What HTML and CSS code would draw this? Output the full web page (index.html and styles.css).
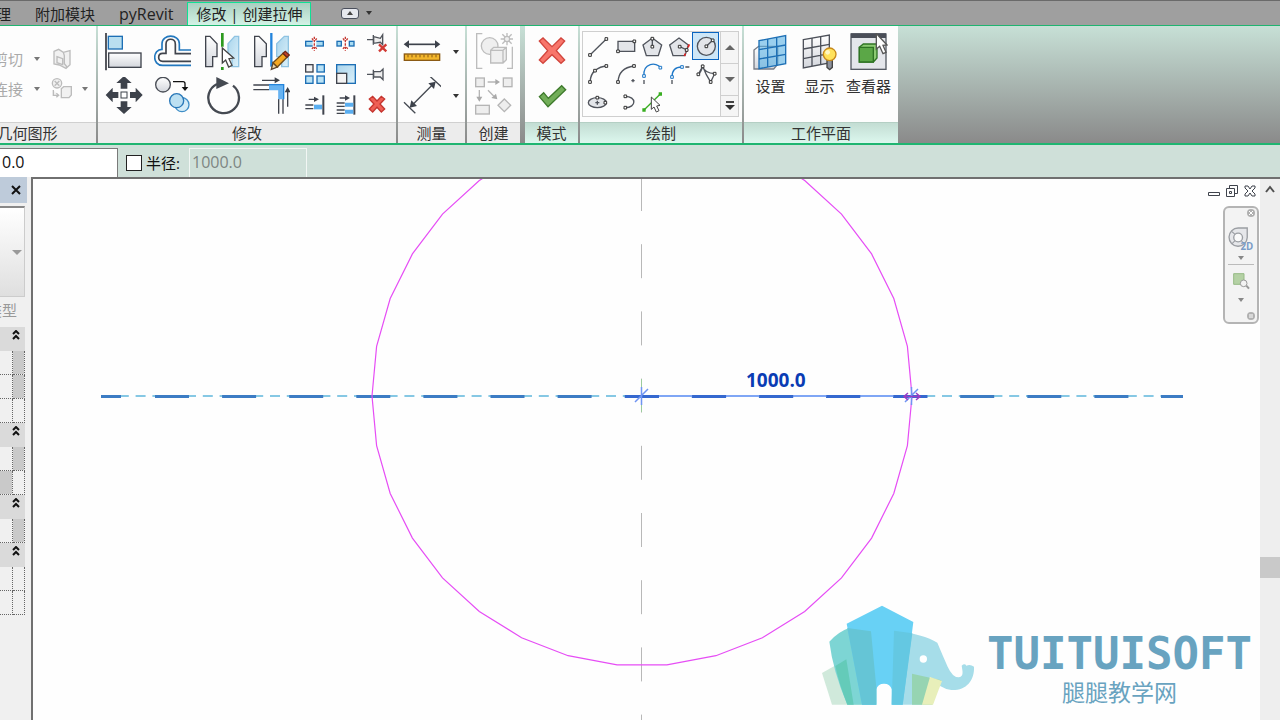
FILE: index.html
```html
<!DOCTYPE html>
<html lang="zh-CN">
  <head>
    <meta charset="UTF-8" />
    <meta name="viewport" content="width=device-width, initial-scale=1.0" />
    <title>修改 | 创建拉伸</title>
    <link rel="stylesheet" href="styles.css" />
  </head>
  <body>
    <svg class="defs" aria-hidden="true">
      <defs>
        <linearGradient id="steel" x1="0" y1="0" x2="0" y2="1">
          <stop offset="0" stop-color="#ffffff" />
          <stop offset="1" stop-color="#d3d6dc" />
        </linearGradient>
        <linearGradient id="sky" x1="0" y1="0" x2="1" y2="1">
          <stop offset="0" stop-color="#a9d4ec" />
          <stop offset="1" stop-color="#dcf1fa" />
        </linearGradient>
      </defs>
    </svg>

    <nav class="tabs">
      <a class="tab" href="#">理</a>
      <a class="tab" href="#">附加模块</a>
      <a class="tab addin" href="#">pyRevit</a>
      <a class="tab active" href="#">修改 | 创建拉伸</a>
      <button class="minimize" aria-label="最小化功能区"><span class="pill"><i class="caret up"></i></span><i class="caret"></i></button>
    </nav>

    <div class="ribbon">
      <section class="panel geometry">
        <div class="panel-body">
          <button class="cmd">剪切</button>
          <i class="caret"></i>
          <button aria-label="拆分面">
            <svg width="22" height="22" viewBox="153 141 66 66" fill="#f1f1f1" stroke="#bcbcbc" stroke-width="4">
              <path d="M162 151l14-6 14 9 20-5v42l-12 11-20-10-16-3z" />
              <path d="M171 167l17 6v18l-17-6zM190 154l3 10v24l8 10" />
            </svg>
          </button>
          <i></i>
          <button class="cmd">连接</button>
          <i class="caret"></i>
          <button aria-label="取消连接">
            <svg width="22" height="22" viewBox="153 236 66 66" fill="#f1f1f1" stroke="#bcbcbc" stroke-width="4">
              <circle cx="171" cy="252" r="14" />
              <path d="M164 245l14 14M178 245l-14 14M160 272v16h14M169 282l7 6-7 6" />
              <path d="M184 268l7-6h23v25l-7 8h-23z" />
            </svg>
          </button>
          <i class="caret"></i>
        </div>
        <h2>几何图形</h2>
      </section>

      <section class="panel modify">
        <div class="panel-body">
          <div class="big-tools">
            <button aria-label="对齐">
              <svg width="38" height="38" viewBox="15 21 114 114" stroke-width="4">
                <path d="M18 18v115" stroke="#35383f" stroke-width="5" />
                <rect x="25" y="31" width="42" height="38" fill="#b9dff0" stroke="#1d6fb5" />
                <rect x="26" y="81" width="97" height="43" fill="url(#steel)" stroke="#40444d" />
              </svg>
            </button>
            <button aria-label="偏移">
              <svg width="38" height="38" viewBox="162 21 114 114" fill="none">
                <path d="M273 72H238V53C238 23 186 23 186 53V70C158 70 155 118 188 118H273" stroke="#2278bf" stroke-width="5" />
                <path d="M273 83H226V54C226 35 198 35 198 54V82H188C172 82 172 106 188 106H273" stroke="#40444d" stroke-width="5" />
              </svg>
            </button>
            <button aria-label="镜像 - 拾取轴">
              <svg width="38" height="38" viewBox="310 21 114 114" stroke-width="4">
                <path d="M318 31h13l21 22v39h-13v30h-21z" fill="url(#steel)" stroke="#40444d" />
                <path d="M417 31h-12l-20 22v39h12v30h20z" fill="url(#sky)" stroke="#8fc3e2" />
                <path d="M368 18v44M368 123v9" stroke="#2d9a1f" stroke-width="8" />
                <path d="M368 66v45l10-9 9 21 10-5-9-20 14-2z" fill="#fff" stroke="#444" />
              </svg>
            </button>
            <button aria-label="镜像 - 绘制轴">
              <svg width="38" height="38" viewBox="21 21 114 114" stroke-width="4">
                <path d="M29 31h13l22 22v39H51v30H29z" fill="url(#steel)" stroke="#40444d" />
                <path d="M130 31h-12l-23 22v39h15v30h20z" fill="url(#sky)" stroke="#8fc3e2" />
                <path d="M79 18v104" stroke="#2384dc" stroke-width="7" />
                <path d="M79 130l5-20 13 13z" fill="#eed9ac" stroke="#5b4630" />
                <path d="M84 110l30-28 12 12-29 29z" fill="#f4a823" stroke="#6e4a18" />
                <path d="M114 82l7-6 12 11-7 7z" fill="#c5402b" stroke="#6a2a1a" />
              </svg>
            </button>
            <button aria-label="移动">
              <svg width="38" height="38" viewBox="15 153 114 114" fill="#3d424b">
                <path d="M72 150l23 21H82v17H62v-17H49zM72 264l23-21H82v-17H62v17H49zM17 207l21-22v13h17v18H38v13zM128 207l-21-22v13H90v18h17v13z" />
                <rect x="63" y="198" width="18" height="18" fill="#fff" stroke="#3d424b" stroke-width="3" />
              </svg>
            </button>
            <button aria-label="复制">
              <svg width="38" height="38" viewBox="162 153 114 114" stroke-width="4">
                <circle cx="189" cy="176" r="22" fill="url(#steel)" stroke="#4a4e56" />
                <circle cx="246" cy="236" r="21" fill="#d4ecf8" stroke="#3f8ec7" />
                <circle cx="230" cy="224" r="21" fill="#bce0f2" stroke="#2877b8" />
                <path d="M219 167h30q6 0 6 6v14" fill="none" stroke="#111" />
                <path d="M245 183h20l-10 12z" fill="#111" />
              </svg>
            </button>
            <button aria-label="旋转">
              <svg width="38" height="38" viewBox="310 153 114 114">
                <path d="M352 174a46 46 0 1 0 48 5" fill="none" stroke="#454a52" stroke-width="7" />
                <path d="M350 153v36l38-17z" fill="#454a52" />
              </svg>
            </button>
            <button aria-label="修剪/延伸为角">
              <svg width="38" height="38" viewBox="21 153 114 114" fill="none" stroke="#40444d" stroke-width="4">
                <path d="M25 177h47M25 191h47M101 219v44M114 219v44" />
                <path d="M72 184h36v36" stroke="#67b3f2" stroke-width="17" />
                <path d="M72 176h44v44" stroke="#2384dc" />
                <path d="M51 163h44M128 242v-48" />
                <path d="M89 154l16 9-16 9zM119 199l9-16 9 16z" fill="#3d424b" stroke="none" />
              </svg>
            </button>
          </div>
          <div class="small-tools">
            <button aria-label="拆分图元">
              <svg width="24" height="24" viewBox="174 18 72 72">
                <rect x="182" y="46" width="53" height="14" fill="#a9dcf2" stroke="#1d6fb5" stroke-width="4" />
                <rect x="203" y="42" width="11" height="22" fill="#fff" />
                <path d="M208 32v42M201 37l5 8M215 37l-5 8M201 69l5-8M215 69l-5-8" stroke="#c63a33" stroke-width="4" stroke-dasharray="7 3" />
              </svg>
            </button>
            <button aria-label="用间隙拆分">
              <svg width="24" height="24" viewBox="267 18 72 72">
                <g fill="#a9dcf2" stroke="#1d6fb5" stroke-width="4">
                  <rect x="276" y="46" width="13" height="14" /><rect x="313" y="46" width="14" height="14" />
                </g>
                <path d="M301 32v42M294 37l5 8M308 37l-5 8M294 69l5-8M308 69l-5-8" stroke="#c63a33" stroke-width="4" stroke-dasharray="7 3" />
              </svg>
            </button>
            <button aria-label="解锁">
              <svg width="24" height="24" viewBox="360 18 72 72" fill="#eee" stroke="#50545b" stroke-width="4">
                <path d="M366 41h19M385 27v29M386 32l20 5 7-11v30l-7-7-20 3z" />
                <path d="M402 55l22 21M424 55l-22 21" stroke="#d23b35" stroke-width="7" />
              </svg>
            </button>
            <button aria-label="阵列">
              <svg width="24" height="24" viewBox="174 108 72 72" fill="#b9e2f5" stroke="#1d6fb5" stroke-width="4">
                <rect x="182" y="116" width="22" height="22" fill="#f3f3f3" stroke="#40444d" />
                <rect x="216" y="116" width="22" height="22" />
                <rect x="182" y="150" width="22" height="22" />
                <rect x="216" y="150" width="22" height="22" />
              </svg>
            </button>
            <button aria-label="缩放">
              <svg width="24" height="24" viewBox="267 108 72 72" stroke-width="4">
                <rect x="275" y="116" width="56" height="56" fill="url(#sky)" stroke="#1d6fb5" />
                <rect x="275" y="142" width="30" height="30" fill="#f3f3f3" stroke="#40444d" />
              </svg>
            </button>
            <button aria-label="锁定">
              <svg width="24" height="24" viewBox="360 108 72 72" fill="#eee" stroke="#50545b" stroke-width="4">
                <path d="M366 145h19M385 131v29M386 137h20l8-8v32l-8-8h-20z" />
              </svg>
            </button>
            <button aria-label="修剪/延伸单个图元">
              <svg width="24" height="24" viewBox="174 198 72 72" fill="none" stroke="#40444d" stroke-width="4">
                <path d="M235 208v58" stroke-width="6" />
                <path d="M181 237h24M181 248h24M191 220h20" />
                <path d="M207 243h24" stroke="#5aaef0" stroke-width="14" />
                <path d="M207 212l15 8-15 8z" fill="#3d424b" stroke="none" />
              </svg>
            </button>
            <button aria-label="修剪/延伸多个图元">
              <svg width="24" height="24" viewBox="267 198 72 72" fill="none" stroke="#40444d" stroke-width="4">
                <path d="M328 208v58" stroke-width="6" />
                <path d="M275 231h24M275 241h24M275 252h24M275 262h24M284 216h20" />
                <path d="M300 236h25M300 257h25" stroke="#5aaef0" stroke-width="12" />
                <path d="M300 208l15 8-15 8z" fill="#3d424b" stroke="none" />
              </svg>
            </button>
            <button aria-label="删除">
              <svg width="24" height="24" viewBox="360 198 72 72">
                <path d="M373 219l10-8 13 14 13-14 10 8-14 15 14 15-10 9-13-14-13 14-10-9 14-15z" fill="#ef5f55" stroke="#c5352f" stroke-width="4" />
              </svg>
            </button>
          </div>
        </div>
        <h2>修改</h2>
      </section>

      <section class="panel measure">
        <div class="panel-body">
          <button aria-label="测量">
            <svg width="38" height="38" viewBox="25 21 114 114">
              <path d="M35 55h95" stroke="#3d424b" stroke-width="5" />
              <path d="M27 55l16-12v24zM137 55l-16-12v24z" fill="#3d424b" />
              <rect x="29" y="84" width="106" height="19" fill="#f3b62b" stroke="#8b5a14" stroke-width="4" />
              <path d="M40 86v8M52 86v8M64 86v8M76 86v8M88 86v8M100 86v8M112 86v8M124 86v8" stroke="#8b5a14" stroke-width="3" />
            </svg>
          </button>
          <i class="caret"></i>
          <button aria-label="对齐尺寸标注">
            <svg width="38" height="38" viewBox="25 153 114 114">
              <path d="M50 240l68-68M106 151l34 31M28 229l34 33" stroke="#454a52" stroke-width="4" />
              <path d="M123 167l-5 22-17-17zM45 245l5-22 17 17z" fill="#3d424b" />
            </svg>
          </button>
          <i class="caret"></i>
        </div>
        <h2>测量</h2>
      </section>

      <section class="panel create">
        <div class="panel-body">
          <button aria-label="创建组">
            <svg width="38" height="38" viewBox="234 21 114 114" fill="#efefef" stroke="#bdbdbd" stroke-width="4">
              <path d="M256 23h-17v104h17M330 127h16V62" fill="none" />
              <circle cx="278" cy="60" r="25" />
              <path d="M281 73l9-9h38v37l-10 10h-37zM281 73h37v38M318 73l10-9" />
              <path d="M330 20v38M311 39h38M316 25l28 28M344 25l-28 28" />
              <circle cx="330" cy="39" r="8" />
            </svg>
          </button>
          <button aria-label="创建类似">
            <svg width="38" height="38" viewBox="234 150 114 114" fill="#eee" stroke="#b5b5b5" stroke-width="4">
              <rect x="236" y="153" width="26" height="26" />
              <rect x="319" y="153" width="26" height="26" />
              <rect x="236" y="235" width="41" height="26" />
              <path d="M322 216l19 19-19 19-19-19z" />
              <path d="M272 165h25M247 189v23M273 190l17 17" />
              <path d="M295 156l14 9-14 9zM238 209l9 15 9-15zM297 200l4 17-18-4z" fill="#a9a9a9" stroke="none" />
            </svg>
          </button>
        </div>
        <h2>创建</h2>
      </section>

      <section class="panel mode context">
        <div class="panel-body">
          <button aria-label="取消编辑模式">
            <svg width="38" height="38" viewBox="413 21 114 114">
              <path d="M432 45l11-9 27 26 27-26 11 9-25 29 25 28-11 10-27-26-27 26-11-10 25-28z" fill="#f8766b" stroke="#d2453d" stroke-width="4" />
            </svg>
          </button>
          <button aria-label="完成编辑模式">
            <svg width="38" height="38" viewBox="413 153 114 114">
              <path d="M432 212l13-12 14 17 40-38 12 12-53 51z" fill="#72ae59" stroke="#3e7a2c" stroke-width="4" />
            </svg>
          </button>
        </div>
        <h2>模式</h2>
      </section>

      <section class="panel draw context">
        <div class="panel-body">
          <div class="gallery">
            <div class="shapes">
              <button aria-label="线">
                <svg width="26" height="26" viewBox="18 21 78 78"><path class="line" d="M33 87l49-48" /><path class="node" d="M29 83h8v8h-8zM78 35h8v8h-8z" /></svg>
              </button>
              <button aria-label="矩形">
                <svg width="26" height="26" viewBox="102 21 78 78"><path class="line face" d="M120 46h50v30h-50z" /><path class="node" d="M116 72h8v8h-8zM165 42h8v8h-8z" /></svg>
              </button>
              <button aria-label="内接多边形">
                <svg width="26" height="26" viewBox="183 21 78 78"><path class="line face" d="M223 36l28 21-10 32h-36l-10-32z" /><path class="line" d="M223 38v24" /><path class="node" d="M219 34h8v8h-8zM219 58h8v8h-8z" /></svg>
              </button>
              <button aria-label="外接多边形">
                <svg width="26" height="26" viewBox="264 21 78 78"><path class="line face" d="M303 36l28 21-10 32h-36l-10-32z" /><path class="line" d="M305 62l22 10" /><path d="M334 55l-15 35" stroke="#e02020" stroke-width="5" stroke-dasharray="10 5" /><path class="node" d="M301 58h8v8h-8zM322 68h8v8h-8z" /></svg>
              </button>
              <button class="selected" aria-label="圆形">
                <svg width="26" height="26" viewBox="345 21 78 78"><circle class="line face" cx="385" cy="61" r="27" /><path class="line" d="M385 61l19-18" /><path class="node" d="M381 57h8v8h-8zM400 39h8v8h-8z" /></svg>
              </button>
              <button aria-label="起点-终点-半径弧">
                <svg width="26" height="26" viewBox="18 105 78 78"><path class="line" d="M33 168q2-25 16-35 15-12 33-13" /><path class="node" d="M29 164h8v8h-8zM44 130h8v8h-8zM78 116h8v8h-8z" /></svg>
              </button>
              <button aria-label="圆心-端点弧">
                <svg width="26" height="26" viewBox="102 105 78 78"><path class="line" d="M120 168q2-42 48-48M160 164h10M165 159v10" /><path class="node" d="M116 164h8v8h-8zM164 116h8v8h-8z" /></svg>
              </button>
              <button aria-label="相切-端点弧">
                <svg width="26" height="26" viewBox="183 105 78 78"><path class="line blue" d="M198 150c-4-40 38-43 49-25" /><path class="line" d="M198 162v12" /><path class="node blue" d="M194 146h8v8h-8zM243 121h8v8h-8z" /></svg>
              </button>
              <button aria-label="圆角弧">
                <svg width="26" height="26" viewBox="264 105 78 78"><path class="line blue" d="M282 153q0-30 29-30" /><path class="line" d="M282 162v12M322 123h12" /><path class="node blue" d="M278 149h8v8h-8zM308 119h8v8h-8z" /></svg>
              </button>
              <button aria-label="样条曲线">
                <svg width="26" height="26" viewBox="345 105 78 78"><path class="line" d="M361 145l13-24 11 25 13 22 12-25q-30-2-36-22-5 18-13 24" /><path class="node" d="M357 141h8v8h-8zM370 117h8v8h-8zM394 164h8v8h-8zM406 139h8v8h-8z" /></svg>
              </button>
              <button aria-label="椭圆">
                <svg width="26" height="26" viewBox="18 189 78 78"><ellipse class="line face" cx="55" cy="230" rx="27" ry="15" /><path class="line" d="M49 230h12M55 224v12" /><path class="node" d="M51 211h8v8h-8zM75 226h8v8h-8z" /></svg>
              </button>
              <button aria-label="半椭圆">
                <svg width="26" height="26" viewBox="102 189 78 78"><path class="line" d="M142 211c34 0 34 34 0 34" /><path class="node" d="M138 207h8v8h-8zM138 241h8v8h-8z" /></svg>
              </button>
              <button aria-label="拾取线">
                <svg width="26" height="26" viewBox="183 189 78 78"><path d="M198 252l49-48" stroke="#38ad20" stroke-width="4" /><path d="M193 247h10v10h-10zM242 199h10v10h-10z" fill="#38ad20" /><path d="M220 213v37l8-7 7 15 8-4-7-14 10-2z" fill="#fff" stroke="#444" stroke-width="3" /></svg>
              </button>
            </div>
            <div class="gallery-scroll">
              <button aria-label="上一行"><i class="caret up"></i></button>
              <button aria-label="下一行"><i class="caret"></i></button>
              <button class="more" aria-label="更多"><i class="caret"></i></button>
            </div>
          </div>
        </div>
        <h2>绘制</h2>
      </section>

      <section class="panel workplane context">
        <div class="panel-body">
          <button>
            <svg width="38" height="38" viewBox="33 99 114 114" stroke-width="4">
              <path d="M39 150l14-11h57v54l-12 14H39z" fill="url(#steel)" stroke="#777c86" />
              <path d="M54 122l80-15v84l-80 15z" fill="#58b0e4" fill-opacity=".6" stroke="#1d6fb5" />
              <path d="M80 117v84M107 112v84M54 149l80-14M54 177l80-14" stroke="#1d6fb5" />
            </svg>
            设置
          </button>
          <button>
            <svg width="38" height="38" viewBox="180 99 114 114" stroke-width="4">
              <path d="M187 119l78-14v84l-78 15z" fill="url(#steel)" stroke="#4d515a" />
              <path d="M213 114v84M239 109v84M187 147l78-14M187 176l78-15" stroke="#4d515a" />
              <path d="M258 180h16v22l-8 7-8-7z" fill="#8d929c" stroke="#444" />
              <circle cx="266" cy="163" r="19" fill="#ffe25c" stroke="#c8891a" />
              <circle cx="260" cy="157" r="7" fill="#fff7c4" />
            </svg>
            显示
          </button>
          <button>
            <svg width="38" height="38" viewBox="330 99 114 114" stroke-width="4">
              <rect x="333" y="102" width="105" height="106" fill="#e4e6eb" stroke="#555a64" />
              <path d="M333 107h105" stroke="#4a4e58" stroke-width="14" />
              <path d="M358 142l12-10h41v42l-11 12h-42z" fill="#8ccb73" stroke="#2f7424" />
              <path d="M358 142h42v44h-42z" fill="#5ba747" stroke="#2f7424" />
              <path d="M409 101v46l10-8 10 22 9-4-9-21 12-1z" fill="#fff" stroke="#555" />
            </svg>
            查看器
          </button>
        </div>
        <h2>工作平面</h2>
      </section>
    </div>

    <form class="options">
      <input class="offset" type="text" value="0.0" aria-label="偏移" />
      <label class="radius-label"><input type="checkbox" />半径:</label>
      <input class="radius" type="text" value="1000.0" aria-label="半径" disabled />
    </form>

    <main class="workspace">
      <aside class="properties">
        <header>
          <button aria-label="关闭">
            <svg width="12" height="12" viewBox="0 0 12 12"><path d="M2 2l8 8M10 2l-8 8" stroke="#111" stroke-width="2" /></svg>
          </button>
        </header>
        <button class="type-selector" aria-label="类型选择器"><i class="caret"></i></button>
        <div class="edit-type"><span>类型</span></div>
        <button class="group" aria-label="折叠"><svg width="8" height="10" viewBox="0 0 8 10"><path d="M1 4l3-3 3 3M1 9l3-3 3 3" /></svg></button>
        <div class="prop"><span></span><span class="grey"></span></div>
        <div class="prop"><span></span><span class="grey"></span></div>
        <div class="prop"><span></span><span></span></div>
        <button class="group" aria-label="折叠"><svg width="8" height="10" viewBox="0 0 8 10"><path d="M1 4l3-3 3 3M1 9l3-3 3 3" /></svg></button>
        <div class="prop"><span></span><span class="grey"></span></div>
        <div class="prop"><span class="grey"></span><span></span></div>
        <button class="group" aria-label="折叠"><svg width="8" height="10" viewBox="0 0 8 10"><path d="M1 4l3-3 3 3M1 9l3-3 3 3" /></svg></button>
        <div class="prop"><span></span><span class="grey"></span></div>
        <button class="group" aria-label="折叠"><svg width="8" height="10" viewBox="0 0 8 10"><path d="M1 4l3-3 3 3M1 9l3-3 3 3" /></svg></button>
        <div class="prop"><span></span><span></span></div>
        <div class="prop"><span></span><span></span></div>
      </aside>

      <div class="view">
        <div class="canvas">
          <svg class="sketch" viewBox="33 179 1227 541" preserveAspectRatio="xMidYMid slice">
            <!-- reference planes -->
            <path d="M641.5 177V720" stroke="#b8b8b8" stroke-dasharray="34 33.2" />
            <path d="M101 396H1183" stroke="#86c8e4" stroke-width="2" stroke-dasharray="10 6.8" stroke-dashoffset="-1" />
            <path d="M101 396.5h20M155 396.5H1160" stroke="#3c7cc4" stroke-width="3" stroke-dasharray="34 33.1" />
            <path d="M1161 396.5h22" stroke="#3c7cc4" stroke-width="3" />
            <!-- circle being sketched -->
            <polygon points="912,396 907.4,445.6 893.8,493.5 871.6,538.1 841.5,577.9 804.7,611.5 762.4,637.7 715.9,655.7 666.9,664.8 617.1,664.8 568.1,655.7 521.6,637.7 479.3,611.5 442.5,577.9 412.4,538.1 390.2,493.5 376.6,445.6 372,396 376.6,346.4 390.2,298.5 412.4,253.9 442.5,214.1 479.3,180.5 521.6,154.3 568.1,136.3 617.1,127.2 666.9,127.2 715.9,136.3 762.4,154.3 804.7,180.5 841.5,214.1 871.6,253.9 893.8,298.5 907.4,346.4" fill="none" stroke="#e64df5" stroke-width="1.2" />
            <!-- radius dimension -->
            <path d="M642 396H912" stroke="#7fa6f5" stroke-width="2" />
            <path d="M625 396.5H928" stroke="#3568cf" stroke-width="3" stroke-dasharray="34 33.1" />
            <path d="M641.5 379v33" stroke="#9ccb9c" />
            <path d="M641.5 387v18M635 402l13-13M911.5 387v18M905 402l13-13" stroke="#6f94f2" stroke-width="1.5" />
            <path d="M905 396.5h14M908 393l-4 3.5 4 3.5M916 393l4 3.5-4 3.5" fill="none" stroke="#9b3bc4" stroke-width="1.5" />
            <text class="dimension" x="746" y="387">1000.0</text>
          </svg>

          <div class="window-buttons">
            <button aria-label="最小化"><svg width="14" height="14" viewBox="0 0 14 14"><path d="M1.500 8.500h11v3h-11z" /></svg></button>
            <button aria-label="还原"><svg width="14" height="14" viewBox="0 0 14 14"><path d="M4.500 4V1.500h8v8H10M1.500 4.500h8v8h-8zM4.500 7.500h2v2h-2z" /></svg></button>
            <button aria-label="关闭"><svg width="14" height="14" viewBox="0 0 14 14"><path d="M2 2h3l2 3 2-3h3v2L9 7l3 3v2H9L7 9l-2 3H2v-2l3-3-3-3z" /></svg></button>
          </div>

          <div class="navbar">
            <button class="knob" aria-label="关闭导航栏"><svg width="8" height="8" viewBox="0 0 8 8"><circle cx="4" cy="4" r="4" fill="#b0b0b0" /><path d="M2 2l4 4M6 2L2 6" stroke="#fff" /></svg></button>
            <button class="wheel" aria-label="二维控制盘">
              <svg width="27" height="27" viewBox="115 148 80 80">
                <path d="M145 157h27v28a27 27 0 1 1-27-28z" fill="#e6e7ea" stroke="#9b9ea3" stroke-width="4" />
                <circle cx="145" cy="185" r="13" fill="#fafafa" stroke="#9b9ea3" stroke-width="4" />
                <path d="M127 168l9 8M154 194l8 9M136 194l-9 9" stroke="#9b9ea3" stroke-width="3" />
                <text x="152" y="221" class="two-d">2D</text>
              </svg>
            </button>
            <i class="caret"></i>
            <hr />
            <button class="zoom" aria-label="区域放大">
              <svg width="20" height="20" viewBox="122 284 60 60">
                <path d="M130 292h31v32h-31z" fill="#b4d1a4" stroke="#97bb86" stroke-width="3" />
                <path d="M168 328l8 9" stroke="#999" stroke-width="6" />
                <circle cx="160" cy="321" r="10" fill="#f3f3f3" stroke="#999" stroke-width="3" />
              </svg>
            </button>
            <i class="caret"></i>
            <button class="knob" aria-label="导航栏选项"><svg width="8" height="8" viewBox="0 0 8 8"><circle cx="4" cy="4" r="4" fill="#b0b0b0" /><path d="M2 3h4M2 5h4" stroke="#fff" /></svg></button>
          </div>

          <div class="watermark">
            <svg width="157" height="102" viewBox="30 40 471 306">
              <path d="M36 247l73-41 48 136H66z" fill="#d0e9db" />
              <path d="M58 153q26-30 61-42l64 10 16 121v100h-87q-43-100-54-189z" fill="#7dd5d4" />
              <path d="M76 226l33-20 22 136h-19q-24-60-36-116z" fill="#64cbb9" />
              <path d="M252 120q90 10 130 36 15 36 31 72 15 33 34 32c16-3 10-21 8-35q9-8 14 0 12-5 23 3c2 43-25 72-68 70q-36-5-64-40l-24 84h-88z" fill="#a6dde9" />
              <path d="M306 249l88 20-27 73h-61z" fill="#96d4b2" />
              <path d="M360 259l36 12-27 71h-33z" fill="#e8efba" />
              <path d="M110 99l106-54 94 49-32 248h-33v-46q-4-17-23-17t-23 17v46h-43z" fill="#68d1f5" />
              <path d="M112 112l71 10 16 169v51h-43z" fill="#65c5d6" />
              <path d="M252 120l55 8-29 214h-33z" fill="#64c8e2" />
              <circle cx="340" cy="205" r="11" fill="#fff" />
            </svg>
            <div class="brand">
              <strong>TUITUISOFT</strong>
              <span>腿腿教学网</span>
            </div>
          </div>
        </div>

        <div class="scrollbar">
          <button aria-label="向上滚动"><svg width="12" height="10" viewBox="0 0 12 10"><path d="M2 8l4-5 4 5" fill="none" stroke="#505050" stroke-width="2" /></svg></button>
          <span class="track"></span>
          <span class="thumb"></span>
          <span class="track-end"></span>
        </div>
      </div>
    </main>
  </body>
</html>
```
FILE: styles.css
```css
* {
  box-sizing: border-box;
}
body {
  margin: 0;
  height: 100vh;
  display: flex;
  flex-direction: column;
  overflow: hidden;
  background: #f0f0f0;
  color: #333;
  font-family: "Open Sans", "Noto Sans CJK SC", sans-serif;
  font-size: 15px;
  line-height: 20px;
}
button {
  display: flex;
  align-items: center;
  justify-content: center;
  padding: 0;
  border: none;
  background: none;
  color: inherit;
  font: inherit;
}
svg {
  display: block;
  flex: none;
}
.defs {
  position: absolute;
  width: 0;
  height: 0;
}
.caret {
  width: 0;
  height: 0;
  border: 3px solid transparent;
  border-top: 4px solid #333;
  border-bottom: none;
}
.caret.up {
  border-top: none;
  border-bottom: 4px solid #444;
}

/* tabs */
.tabs {
  flex: none;
  display: flex;
  align-items: flex-end;
  height: 26px;
  margin-left: -16px;
  background: #9f9f9f;
  border-top: 1px solid #6a6a6a;
  border-bottom: 1px solid #1fb571;
}
.tab {
  padding: 0 12px;
  line-height: 22px;
  color: #222;
  text-decoration: none;
  white-space: nowrap;
}
.tab.addin {
  font-size: 16px;
}
.tab.active {
  margin-left: 2px;
  padding: 0 8px;
  border: 1px solid #10e094;
  border-bottom: none;
  background: linear-gradient(#a9cfc0, #d3f2e6);
}
.minimize {
  gap: 7px;
  height: 24px;
  margin-left: 30px;
}
.pill {
  display: flex;
  align-items: center;
  justify-content: center;
  width: 18px;
  height: 11px;
  border: 1px solid #4a4f5c;
  border-radius: 3px;
  background: #e6e8ee;
}

/* ribbon */
.ribbon {
  flex: none;
  display: flex;
  gap: 2px;
  background: linear-gradient(#c7e0d6, #8a8a8a);
  border-bottom: 2px solid #1fb571;
}
.panel {
  display: flex;
  flex-direction: column;
  background: #fdfdfd;
}
.panel-body {
  display: flex;
  align-items: center;
  height: 96px;
}
.panel h2 {
  margin: 0;
  border-top: 1px solid #d0d0d0;
  background: #ececec;
  font-size: 15px;
  font-weight: normal;
  line-height: 20px;
  text-align: center;
}
.panel.context h2 {
  border-color: #b4cfc4;
  background: linear-gradient(#c3ddd3, #dcf7ee);
}
.geometry {
  width: 137px;
  margin-left: -41px;
}
.geometry .panel-body {
  display: grid;
  grid-template-columns: 30px 28px 22px 23px;
  grid-auto-rows: 30px;
  align-content: center;
  align-items: center;
  justify-content: end;
  justify-items: center;
}
.geometry .cmd {
  color: #aaa;
}
.geometry .caret {
  border-top-color: #777;
}
.modify .panel-body {
  gap: 4px;
  padding: 0 4px 0 1px;
}
.big-tools {
  display: grid;
  grid-template-columns: repeat(4, 49px);
  grid-auto-rows: 44px;
}
.small-tools {
  display: grid;
  grid-template-columns: repeat(3, 31px);
  grid-auto-rows: 30px;
}
.measure .panel-body {
  display: grid;
  grid-template-columns: 48px 19px;
  grid-auto-rows: 44px;
  align-content: center;
  align-items: center;
  justify-items: center;
}
.create .panel-body,
.mode .panel-body {
  flex-direction: column;
  justify-content: center;
  gap: 6px;
  width: 53px;
}
.mode {
  margin-left: 3px;
}
.draw .panel-body {
  padding: 0 3px 0 2px;
}
.gallery {
  display: flex;
  border: 1px solid #cfcfcf;
}
.shapes {
  display: grid;
  grid-template-columns: repeat(5, 27px);
  grid-auto-rows: 28px;
  padding: 0 1px;
}
.shapes .selected {
  border: 1px solid #0a64c0;
  background: #cde6f7;
}
.line {
  fill: none;
  stroke: #50545c;
  stroke-width: 4px;
}
.line.face {
  fill: #e3e5e9;
}
.node {
  fill: #fff;
  stroke: #333;
  stroke-width: 3px;
}
.line.blue,
.node.blue {
  stroke: #1f78c8;
}
.gallery-scroll {
  display: flex;
  flex-direction: column;
  width: 18px;
  border-left: 1px solid #cfcfcf;
  background: #f5f5f5;
}
.gallery-scroll button {
  flex: 3;
  border-bottom: 1px solid #cfcfcf;
}
.gallery-scroll .caret {
  border-width: 5px;
  border-top-color: #666;
  border-bottom-width: 0;
}
.gallery-scroll .caret.up {
  border-top-width: 0;
  border-bottom: 5px solid #666;
}
.gallery-scroll .more {
  flex: 2;
  flex-direction: column;
  gap: 2px;
  border-bottom: none;
}
.more::before {
  content: "";
  width: 8px;
  height: 2px;
  background: #444;
}
.gallery-scroll .more .caret {
  border-top-color: #333;
}
.workplane .panel-body {
  align-items: flex-start;
  padding: 7px 5px 0 2px;
}
.workplane button {
  flex-direction: column;
  gap: 5px;
  width: 49px;
}

/* options bar */
.options {
  flex: none;
  display: flex;
  align-items: stretch;
  height: 32px;
  padding-top: 3px;
  background: #cfe0d9;
}
.options input[type="text"] {
  width: 118px;
  height: 29px;
  padding: 0 2px 2px;
  border: 1px solid #7a7a7a;
  border-width: 1px 1px 0 0;
  background: #fff;
  color: #111;
  font: inherit;
  font-size: 16px;
}
.options input.radius {
  border: 1px solid #f2f6f4;
  border-bottom: none;
  background: #cfe0d9;
  color: #7d8582;
}
.radius-label {
  display: flex;
  align-items: center;
  gap: 4px;
  width: 71px;
  padding-left: 8px;
  color: #111;
}
.radius-label input {
  appearance: none;
  width: 16px;
  height: 16px;
  margin: 0;
  border: 1px solid #222;
  background: #fff;
}

/* workspace */
.workspace {
  flex: 1;
  display: flex;
  min-height: 0;
}
.properties {
  flex: 0 0 31px;
  padding-right: 6px;
  overflow: hidden;
}
.properties header {
  width: 27px;
  height: 26px;
  margin-bottom: 3px;
  padding: 7px 0 0 10px;
  background: #becbda;
}
.type-selector {
  width: 25px;
  height: 91px;
  border-top: 2px solid #888;
  border-right: 1px solid #ccc;
  border-bottom: 1px solid #ccc;
  padding-left: 9px;
  background: linear-gradient(#fff, #dfdfdf);
}
.type-selector .caret {
  border-width: 5px 5px 0;
  border-top-color: #999;
}
.edit-type {
  display: flex;
  justify-content: flex-end;
  padding: 3px 8px 7px 0;
  color: #999;
  white-space: nowrap;
}
.group {
  width: 25px;
  height: 24px;
  padding: 0 0 8px 6px;
  background: #dadada;
}
.group svg {
  fill: none;
  stroke: #111;
  stroke-width: 2px;
}
.prop {
  display: grid;
  grid-template-columns: 13px 12px;
  height: 24px;
}
.prop span {
  border-right: 1px dotted #666;
  border-bottom: 1px dotted #666;
}
.prop .grey {
  background: #c9c9c9;
  background-clip: padding-box;
}
.view {
  flex: 1;
  display: flex;
  min-width: 0;
  border: 2px solid #707070;
  border-width: 2px 0 0 2px;
}
.canvas {
  flex: 1;
  position: relative;
  min-width: 0;
  overflow: hidden;
  background: #fefefe;
}
.sketch {
  width: 100%;
  height: 100%;
}
.dimension {
  fill: #0a3cb4;
  font-size: 19px;
  font-weight: bold;
}
.window-buttons {
  position: absolute;
  top: 5px;
  right: 3px;
  display: flex;
  gap: 4px;
}
.window-buttons svg {
  fill: none;
  stroke: #3f434c;
  stroke-width: 1px;
}
.navbar {
  position: absolute;
  top: 27px;
  right: 1px;
  display: flex;
  flex-direction: column;
  align-items: center;
  width: 36px;
  height: 118px;
  border: 2px solid #b4b4b4;
  border-radius: 6px;
  background: #f3f3f3;
}
.navbar .knob {
  align-self: flex-end;
  margin: 1px 2px 0 0;
}
.navbar .wheel {
  margin-top: 8px;
}
.navbar .caret {
  margin-top: 4px;
  border-top-color: #888;
}
.navbar hr {
  width: 26px;
  margin: 4px 0 6px;
  border: none;
  border-top: 1px solid #bbb;
}
.navbar .zoom + .caret {
  margin: 7px 0 9px;
}
.two-d {
  fill: #7a9cc6;
  font-size: 29px;
  font-weight: bold;
}
.watermark {
  position: absolute;
  right: 8px;
  bottom: 14px;
  display: flex;
  align-items: flex-end;
  gap: 10px;
  color: #68a3c0;
}
.brand {
  display: flex;
  flex-direction: column;
  align-items: center;
}
.brand strong {
  font-family: "DejaVu Sans Mono", monospace;
  font-size: 44px;
  line-height: 48px;
}
.brand span {
  font-size: 23px;
  line-height: 28px;
}
.scrollbar {
  flex: none;
  display: flex;
  flex-direction: column;
  width: 20px;
  background: #eee;
}
.scrollbar button {
  height: 20px;
}
.track {
  flex: 358;
}
.thumb {
  height: 21px;
  background: #c9c9c9;
}
.track-end {
  flex: 142;
}
```
